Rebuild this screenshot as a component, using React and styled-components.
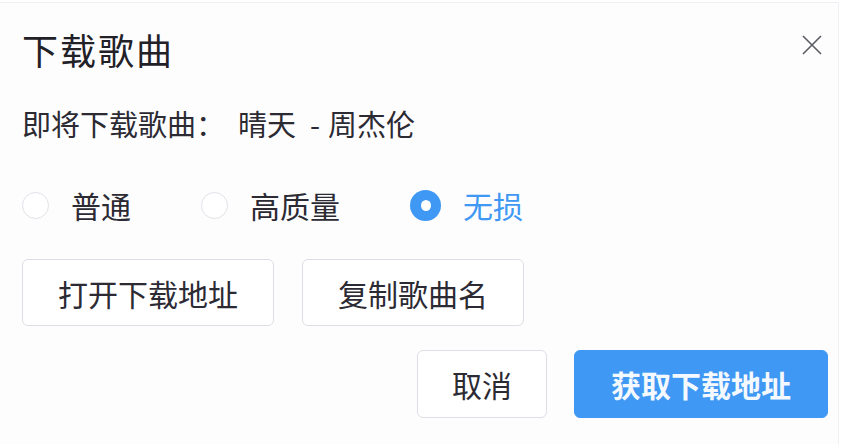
import React from 'react';
import styled, { createGlobalStyle } from 'styled-components';

const GlobalStyle = createGlobalStyle`
  html, body {
    margin: 0;
    padding: 0;
    background: #ffffff;
  }
  body {
    font-family: "Noto Sans CJK SC", "Noto Sans", sans-serif;
    color: #2c2a33;
  }
`;

const BLUE = '#3f98f3';

const Dialog = styled.div`
  box-sizing: border-box;
  width: 839px;
  height: 442px;
  margin-top: 2px;
  background: #fdfdfe;
  border-top: 1px solid #eef0f3;
  border-right: 1px solid #eef0f3;
  padding: 20px 10px 0 22px;
  display: flex;
  flex-direction: column;
`;

const Header = styled.div`
  display: flex;
  align-items: flex-start;
  justify-content: space-between;
  height: 52px;
`;

const Title = styled.h2`
  margin: 0;
  font-size: 36px;
  font-weight: 400;
  letter-spacing: 2px;
  color: #222128;
  line-height: 52px;
`;

const Close = styled.button`
  border: none;
  background: none;
  padding: 0;
  margin: 11px 6px 0 0;
  width: 20px;
  height: 22px;
  display: flex;
  cursor: pointer;
`;

const Message = styled.p`
  margin: 28px 0 0;
  font-size: 29px;
  line-height: 40px;
  color: #2c2a33;
  white-space: pre;
`;

const Sep = styled.span`
  margin: 0 8px 0 14px;
`;

const Options = styled.div`
  display: flex;
  align-items: center;
  gap: 70px;
  margin-top: 42px;
  height: 40px;
`;

const Option = styled.label`
  display: flex;
  align-items: center;
  gap: 22px;
  font-size: 30px;
  color: ${p => (p.$checked ? BLUE : '#2c2a33')};
  cursor: pointer;
`;

const Dot = styled.span`
  box-sizing: border-box;
  width: ${p => (p.$checked ? 31 : 27)}px;
  height: ${p => (p.$checked ? 31 : 27)}px;
  border-radius: 50%;
  border: ${p => (p.$checked ? 'none' : '1px solid #dfe2e7')};
  background: ${p => (p.$checked ? BLUE : '#fff')};
  display: flex;
  align-items: center;
  justify-content: center;

  &::after {
    content: '';
    display: ${p => (p.$checked ? 'block' : 'none')};
    width: 10px;
    height: 11px;
    border-radius: 50%;
    background: #fff;
  }
`;

const Actions = styled.div`
  display: flex;
  gap: 28px;
  margin-top: 34px;
`;

const Button = styled.button`
  box-sizing: border-box;
  height: ${p => p.$h || 67}px;
  padding: 0 ${p => p.$pad || 35}px;
  border-radius: 6px;
  font-family: inherit;
  font-size: 30px;
  font-weight: ${p => (p.$primary ? 700 : 400)};
  color: ${p => (p.$primary ? '#f4f9ff' : '#2c2a33')};
  background: ${p => (p.$primary ? BLUE : '#fff')};
  border: 1px solid ${p => (p.$primary ? BLUE : '#dcdfe5')};
  cursor: pointer;
`;

const Footer = styled.div`
  display: flex;
  justify-content: flex-end;
  gap: 27px;
  margin-top: 24px;
`;

const options = ['普通', '高质量', '无损'];

export default function App() {
  const [quality, setQuality] = React.useState('无损');

  return (
    <>
      <GlobalStyle />
      <Dialog>
        <Header>
          <Title>下载歌曲</Title>
          <Close aria-label="关闭">
            <svg width="20" height="22" viewBox="0 0 20 22">
              <path d="M1 2 L19 20 M19 2 L1 20" stroke="#5a5c61" strokeWidth="1.6" fill="none" />
            </svg>
          </Close>
        </Header>
        <Message>
          即将下载歌曲：  晴天<Sep>-</Sep>周杰伦
        </Message>
        <Options>
          {options.map(o => (
            <Option key={o} $checked={quality === o} onClick={() => setQuality(o)}>
              <Dot $checked={quality === o} />
              {o}
            </Option>
          ))}
        </Options>
        <Actions>
          <Button $pad={35}>打开下载地址</Button>
          <Button $pad={35}>复制歌曲名</Button>
        </Actions>
        <Footer>
          <Button $pad={34} $h={68}>取消</Button>
          <Button $primary $pad={36} $h={68}>获取下载地址</Button>
        </Footer>
      </Dialog>
    </>
  );
}
